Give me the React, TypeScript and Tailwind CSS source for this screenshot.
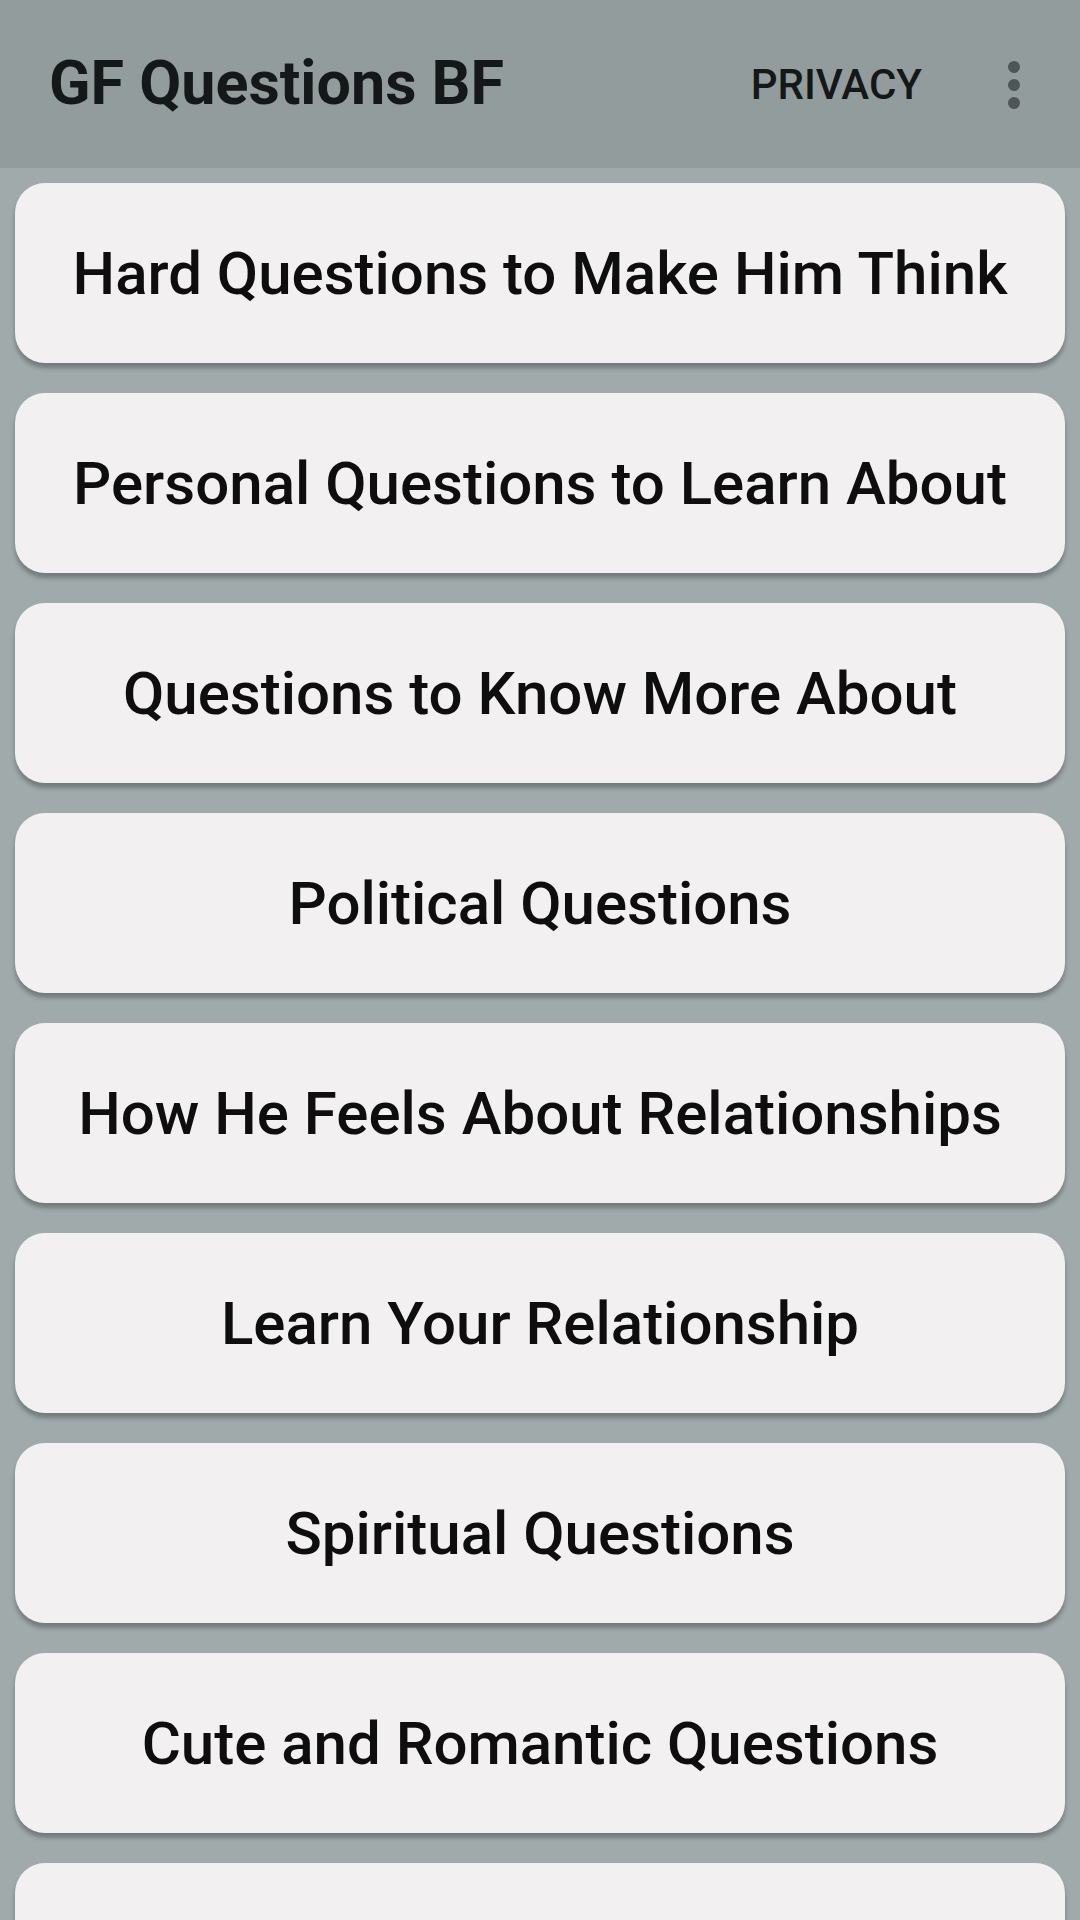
import React from 'react'

const categories = [
  'Hard Questions to Make Him Think',
  'Personal Questions to Learn About',
  'Questions to Know More About',
  'Political Questions',
  'How He Feels About Relationships',
  'Learn Your Relationship',
  'Spiritual Questions',
  'Cute and Romantic Questions',
  '',
]

const App: React.FC = () => {
  return (
    <div className="w-[1080px] h-[1920px] overflow-hidden bg-[#a1aaab] font-['Roboto',sans-serif]">
      {/* Toolbar */}
      <div className="h-[168px] bg-[#939c9c] flex items-center pl-[49px] pr-[60px]">
        <div className="text-[61px] font-bold text-[#151818] flex-1">GF Questions BF</div>
        <div className="text-[42px] font-medium text-[#151818] mr-[86px]">PRIVACY</div>
        <div className="flex flex-col gap-[6px] items-center pt-[2px]">
          <span className="w-[12px] h-[12px] rounded-full bg-[#4f5555]" />
          <span className="w-[12px] h-[12px] rounded-full bg-[#4f5555]" />
          <span className="w-[12px] h-[12px] rounded-full bg-[#4f5555]" />
        </div>
      </div>

      {/* Category list */}
      <div className="flex flex-col gap-[30px] px-[15px] pt-[15px]">
        {categories.map((c, i) => (
          <div
            key={i}
            className="h-[180px] shrink-0 rounded-[30px] bg-[#f2f0f1] shadow-[0_5px_4px_rgba(60,70,70,0.45)] flex items-center justify-center"
          >
            {c && <span className="text-[60px] leading-none font-medium text-[#0e0e0e] pt-[2px]">{c}</span>}
          </div>
        ))}
      </div>
    </div>
  )
}

export default App
